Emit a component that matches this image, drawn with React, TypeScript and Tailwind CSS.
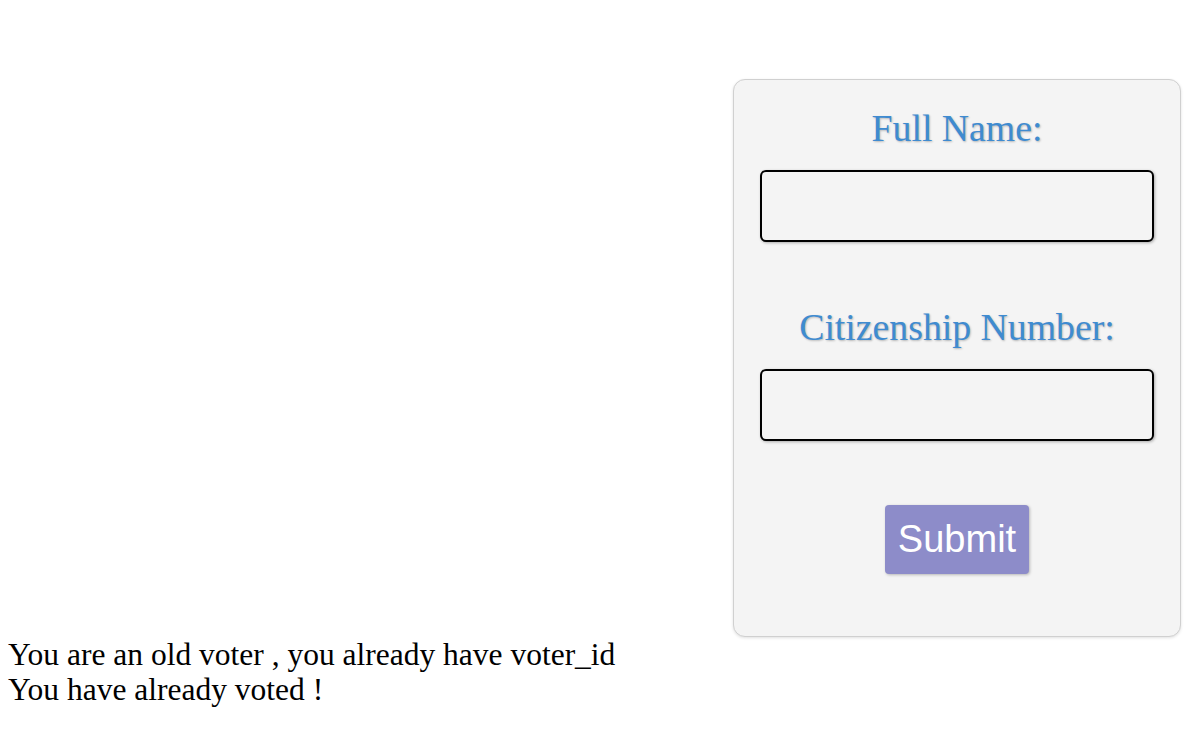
import React from "react";

export default function App() {
  return (
    <div className="bg-white min-h-[731px]" style={{ fontFamily: '"Liberation Serif", "Times New Roman", serif' }}>
      <div className="flex justify-end pt-[79px] pr-[10px]">
        <div className="w-[448px] h-[558px] bg-[#f4f4f4] border border-[#d0d0d0] rounded-[12px] shadow-[0_1px_3px_rgba(0,0,0,0.12)] flex flex-col items-center pt-[27px]">
          <label className="text-[37.75px] leading-[43px] text-[#3f8bd0] [text-shadow:1px_1px_2px_rgba(0,0,0,0.25)]">Full Name:</label>
          <input className="mt-[20px] w-[394px] h-[72px] border-2 border-black rounded-[6px] bg-[#f4f4f4] shadow-[1px_1px_3px_rgba(0,0,0,0.3)] outline-none" />
          <label className="mt-[64px] text-[37.75px] leading-[43px] text-[#3f8bd0] [text-shadow:1px_1px_2px_rgba(0,0,0,0.25)]">Citizenship Number:</label>
          <input className="mt-[20px] w-[394px] h-[72px] border-2 border-black rounded-[6px] bg-[#f4f4f4] shadow-[1px_1px_3px_rgba(0,0,0,0.3)] outline-none" />
          <button className="mt-[64px] w-[144px] h-[69px] bg-[#8d8cc9] text-white rounded-[4px] text-[38px] shadow-[1px_1px_3px_rgba(0,0,0,0.25)]" style={{ fontFamily: '"Liberation Sans", Arial, sans-serif' }}>Submit</button>
        </div>
      </div>
      <div className="pl-[8px] text-[31.5px] leading-[35px] text-black">
        <div>You are an old voter , you already have voter_id</div>
        <div>You have already voted !</div>
      </div>
    </div>
  );
}
